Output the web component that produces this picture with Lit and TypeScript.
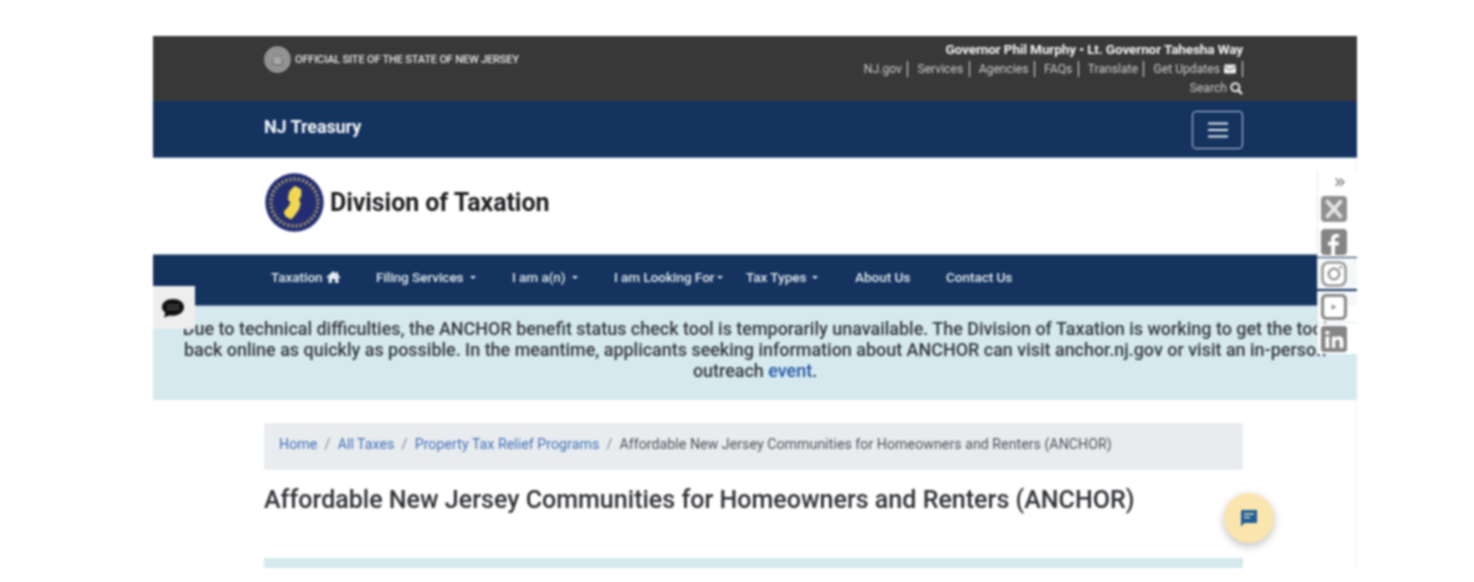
import { LitElement, html, css, svg } from "lit";
import { customElement } from "lit/decorators.js";

const caret = html`<span class="caret"></span>`;

const social = [
  svg`<rect x="0" y="0" width="26" height="26" rx="4" fill="#8f8f8f"/><path d="M5.500 4.500 20.500 21.500M20.500 4.500 5.500 21.500" stroke="#e4e4e4" stroke-width="3.800" fill="none"/>`,
  svg`<rect x="0" y="0" width="26" height="26" rx="4" fill="#858585"/><path d="M14 26v-9.500h3.400l.6-3.800H14v-2.400c0-1.100.5-2 2-2h2.200V5.200C17.500 5.100 16.500 5 15.500 5 12.300 5 10.200 6.900 10.200 10.100v2.600H7v3.800h3.200V26z" fill="#fff"/>`,
  svg`<rect x="1.500" y="1.500" width="23" height="23" rx="6" fill="#fff" stroke="#999" stroke-width="2.600"/><circle cx="13" cy="13" r="5.200" fill="none" stroke="#999" stroke-width="2.600"/><circle cx="19.500" cy="6.500" r="1.500" fill="#999"/>`,
  svg`<rect x="1.500" y="1.500" width="23" height="23" rx="4" fill="#fff" stroke="#8a8a8a" stroke-width="3.200"/><path d="M10.500 10v6l5-3z" fill="#999"/>`,
  svg`<rect x="0" y="0" width="26" height="26" rx="3" fill="#858585"/><path d="M4.500 10.500h3.800V22H4.500zM4.500 5h3.800v3.500H4.500zM11 10.500h3.500v1.600c.8-1.300 2.100-1.900 3.600-1.900 2.900 0 4.300 1.800 4.300 4.800V22h-3.800v-6.200c0-1.500-.6-2.400-1.900-2.400-1.400 0-2.400 1-2.400 2.600V22H11z" fill="#fff"/>`,
];

@customElement("app-root")
export class AppRoot extends LitElement {
  static styles = css`
    :host { display: block; background: #fff; height: 582px; overflow: hidden; font-family: Roboto, "Liberation Sans", sans-serif; }
    .frame { position: relative; width: 1204px; height: 532px; margin: 36px 0 0 153px; overflow: hidden; background: #fff; filter: blur(0.9px); box-shadow: inset -1px 0 0 #f0f0f0; }
    .wrap { padding: 0 114px 0 111px; }
    .gov { height: 65px; background: #383838; color: #f2f2f2; box-sizing: border-box; }
    .gov .wrap { display: flex; justify-content: space-between; }
    .official { display: flex; align-items: center; gap: 4px; height: 47px; font-size: 11.100px; font-weight: 500; color: #e6e6e6; white-space: nowrap; letter-spacing: -0.02em; }
    .seal { width: 27px; height: 27px; flex: none; }
    .gov-right { text-align: right; padding-top: 5px; width: 520px; }
    .who { font-weight: 700; font-size: 13.600px; line-height: 16px; color: #f4f4f4; letter-spacing: -0.01em; white-space: nowrap; }
    .links { display: flex; justify-content: flex-end; align-items: center; height: 24px; color: #cccccc; font-size: 12.150px; white-space: nowrap; }
    .links span { padding: 0 5.500px 0 9px; border-right: 1px solid #e0e0e0; line-height: 16px; display: flex; align-items: center; gap: 4px; }
    .links span:last-child { padding-right: 6px; }
    .search { display: flex; justify-content: flex-end; align-items: center; gap: 3px; color: #cccccc; font-size: 12.150px; height: 14px; }
    .brand { height: 57px; background: #14335f; box-shadow: inset 0 -1px 0 #5b7aa0; }
    .brand .wrap { display: flex; justify-content: space-between; align-items: flex-start; }
    .brand b { margin-top: 15px; font-size: 18px; line-height: 21px; font-weight: 700; color: #f6f8fa; letter-spacing: -0.005em; }
    .toggler { margin-top: 10px; width: 51px; height: 38px; box-sizing: border-box; border: 1px solid #c2cedd; border-radius: 4px; display: flex; align-items: center; justify-content: center; }
    .toggler svg { width: 24px; height: 24px; }
    .division { height: 96px; }
    .division .wrap { display: flex; align-items: center; gap: 6px; height: 89px; }
    .logo { width: 59px; height: 59px; flex: none; margin-left: 1px; }
    .division h2 { margin: 0; font-size: 25px; font-weight: 700; color: #1f1f23; letter-spacing: -0.003em; white-space: nowrap; }
    .nav { height: 52px; background: #14335f; box-shadow: inset 0 1px 0 #8ea2bc, inset 0 -1px 0 #6a86a8; }
    .nav .wrap { display: flex; align-items: center; height: 46px; padding-left: 118px; font-size: 13.600px; font-weight: 500; color: #e6ebf1; white-space: nowrap; letter-spacing: -0.005em; }
    .nav-item { display: flex; align-items: center; gap: 3px; flex: none; }
    .caret { display: inline-block; margin-left: 3px; border-top: 3.500px solid #e6ebf1; border-left: 3.500px solid transparent; border-right: 3.500px solid transparent; }
    .tight .caret { margin-left: -1px; }
    .w105 { width: 105px; }
    .w136 { width: 136px; }
    .w102 { width: 102px; }
    .w132 { width: 132px; }
    .w109 { width: 109px; }
    .w91 { width: 91px; }
    .alert { height: 94px; box-sizing: border-box; background: #d5e9ef; padding: 12px 15px 0; text-align: center; font-size: 17.950px; font-weight: 500; line-height: 21px; color: #33363a; }
    .alert a { color: #2255a4; text-decoration: none; }
    .crumb { margin-top: 23px; height: 47px; box-sizing: border-box; padding: 0 15px 5px; display: flex; align-items: center; gap: 7.200px; background: #e9ecef; border-radius: 3px; font-size: 14.250px; color: #4d5156; white-space: nowrap; }
    .crumb a { color: #4272b8; text-decoration: none; }
    .crumb i { font-style: normal; color: #80868c; }
    h1 { margin: 15px 0 0; font-size: 25.060px; line-height: 29px; font-weight: 500; color: #2f3236; white-space: nowrap; }
    .panel { margin-top: 44px; height: 30px; background: #d5e9ef; }
    .side-chat { position: absolute; left: 0; top: 250px; width: 42px; height: 43px; background: #eeeeee; display: flex; align-items: center; justify-content: center; }
    .side-chat svg { width: 24px; height: 24px; margin-left: -2px; }
    .rail { position: absolute; right: 0; top: 136px; width: 40px; box-sizing: border-box; display: flex; flex-direction: column; gap: 1.500px; }
    .rail .chev { height: 19.500px; background: #fff; box-sizing: border-box; border-left: 1px solid #e4e4e4; text-align: right; padding-right: 11px; font-size: 20px; line-height: 18px; color: #777; font-family: "DejaVu Sans", sans-serif; }
    .rail .item { height: 31px; box-sizing: border-box; background: rgba(255,255,255,.96); border-left: 1px solid #e4e4e4; padding: 3px 0 0 3px; }
    .rail svg { width: 26px; height: 26px; display: block; }
    .fab { position: absolute; left: 1071px; top: 457px; width: 50px; height: 50px; border-radius: 50%; background: #fbe5ae; box-shadow: 0 3px 8px rgba(0,0,0,.25); display: flex; align-items: center; justify-content: center; }
    .fab svg { width: 20px; height: 20px; }
  `;

  render() {
    return html`
      <div class="frame">
        <div class="gov"><div class="wrap">
          <div class="official">
            <svg class="seal" viewBox="0 0 27 27">
              <circle cx="13.500" cy="13.500" r="13.200" fill="#a0a0a0"/>
              <circle cx="13.500" cy="13.500" r="10.500" fill="none" stroke="#6c6c6c" stroke-width="1"/>
              <circle cx="13.500" cy="13.500" r="8" fill="#8d8d8d"/>
              <path d="M9 18v-7l2.500 2 2-4 2 4 2.500-2v7z" fill="#aaa"/>
              <path d="M7 19h13M9 13.500v4M18 13.500v4" stroke="#6c6c6c" stroke-width="1.200"/>
            </svg>
            <span>OFFICIAL SITE OF THE STATE OF NEW JERSEY</span>
          </div>
          <div class="gov-right">
            <div class="who">Governor Phil Murphy • Lt. Governor Tahesha Way</div>
            <div class="links">
              <span>NJ.gov</span><span>Services</span><span>Agencies</span><span>FAQs</span><span>Translate</span>
              <span>Get Updates <svg width="12" height="10" viewBox="0 0 13 10"><rect width="13" height="10" rx="1.500" fill="#eee"/><path d="M0 2l6.500 4L13 2" stroke="#555" fill="none"/></svg></span>
            </div>
            <div class="search">Search <svg width="13" height="13" viewBox="0 0 13 13"><circle cx="5.300" cy="5.300" r="4" fill="none" stroke="#eee" stroke-width="2"/><path d="M8.300 8.300 12 12" stroke="#eee" stroke-width="2.400"/></svg></div>
          </div>
        </div></div>

        <div class="brand"><div class="wrap">
          <b>NJ Treasury</b>
          <div class="toggler"><svg viewBox="0 0 24 24"><path d="M2 5.500h20M2 12h20M2 18.500h20" stroke="#e6ebf1" stroke-width="2"/></svg></div>
        </div></div>

        <div class="division"><div class="wrap">
          <svg class="logo" viewBox="0 0 59 59">
            <circle cx="29.500" cy="29.500" r="29.200" fill="#232e72"/>
            <circle cx="29.500" cy="29.500" r="23.500" fill="none" stroke="#d0bd66" stroke-width="3.500" stroke-dasharray="2 2.200" opacity=".8"/>
            <path d="M26 18.300 30 14.300 35 17 35 22.700 32.700 26 34.300 31 32.700 36 29.300 41 26 45 21.700 42.700 20 39.300 25 33.700 26.700 29.300 24.300 26 25 21z" fill="#f2d850" stroke="#f2d850" stroke-width="2.500" stroke-linejoin="round"/>
          </svg>
          <h2>Division of Taxation</h2>
        </div></div>

        <div class="nav"><div class="wrap">
          <div class="nav-item w105">Taxation <svg width="15" height="12" viewBox="0 0 14 12"><path d="M7 0 0 6l1 1 1-.8V12h3.500V8h3v4H12V6.200l1 .8 1-1-2.500-2.100V1h-2v2.200z" fill="#e8edf2"/></svg></div>
          <div class="nav-item w136">Filing Services${caret}</div>
          <div class="nav-item w102">I am a(n)${caret}</div>
          <div class="nav-item w132 tight">I am Looking For${caret}</div>
          <div class="nav-item w109">Tax Types${caret}</div>
          <div class="nav-item w91">About Us</div>
          <div class="nav-item">Contact Us</div>
        </div></div>

        <div class="alert">Due to technical difficulties, the ANCHOR benefit status check tool is temporarily unavailable. The Division of Taxation is working to get the tool back online as quickly as possible. In the meantime, applicants seeking information about ANCHOR can visit anchor.nj.gov or visit an in-person outreach <a>event</a>.</div>

        <div class="wrap">
          <div class="crumb"><a>Home</a><i>/</i><a>All Taxes</a><i>/</i><a>Property Tax Relief Programs</a><i>/</i><span>Affordable New Jersey Communities for Homeowners and Renters (ANCHOR)</span></div>
          <h1>Affordable New Jersey Communities for Homeowners and Renters (ANCHOR)</h1>
          <div class="panel"></div>
        </div>

        <div class="side-chat"><svg viewBox="0 0 24 24"><path d="M12 3C5.900 3 1 6.400 1 11c0 2.300 1.300 4.400 3.300 5.800L3 21.500l5.300-2.100c1.200.3 2.400.4 3.700.4 6.100 0 11-3.900 11-8.800S18.100 3 12 3z" fill="#111"/><path d="M6 9.500h12M6 13h12" stroke="#555" stroke-width="1.500"/></svg></div>
        <div class="rail">
          <div class="chev">»</div>
          ${social.map((s) => html`<div class="item"><svg viewBox="0 0 26 26">${s}</svg></div>`)}
        </div>
        <div class="fab"><svg viewBox="0 0 20 20"><path d="M2 2h16v13H5.500L2 18.500z" fill="#1f5c99"/><path d="M5 6h10M5 9.500h6" stroke="#e8dcb0" stroke-width="1.600"/></svg></div>
      </div>
    `;
  }
}
